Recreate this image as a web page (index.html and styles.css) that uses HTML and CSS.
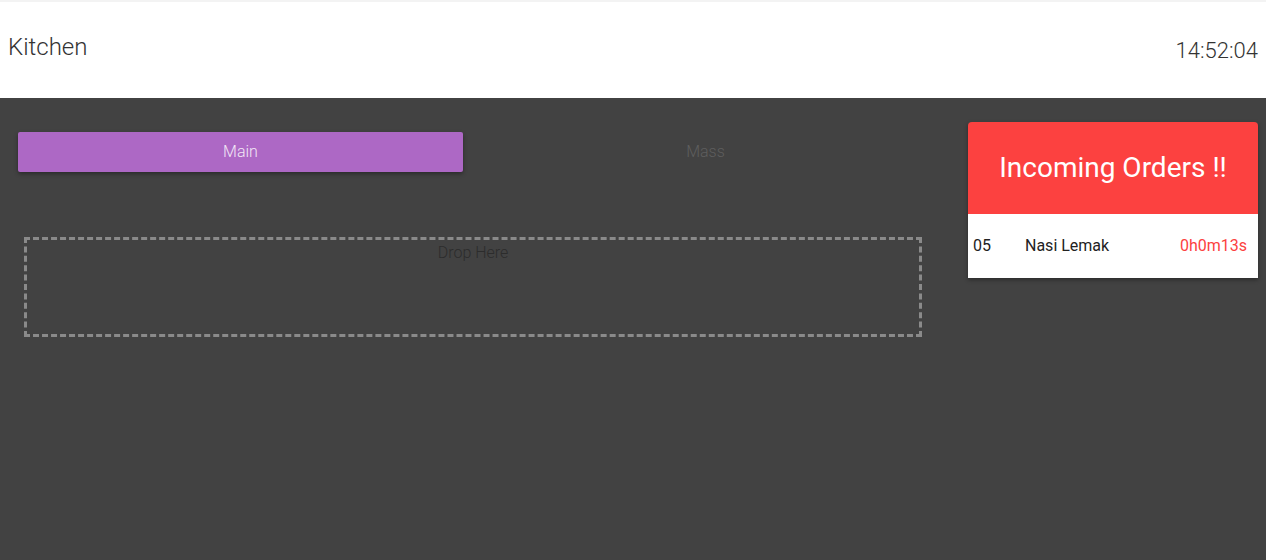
FILE: index.html
```html
<!DOCTYPE html>
<html>
<head>
<meta charset="utf-8">
<link rel="stylesheet" href="styles.css">
</head>
<body>
<header class="topbar">
  <div class="title">Kitchen</div>
  <div class="clock">14:52:04</div>
</header>
<main class="content">
  <section class="left">
    <nav class="tabs">
      <div class="tab active">Main</div>
      <div class="tab">Mass</div>
    </nav>
    <div class="dropzone">Drop Here</div>
  </section>
  <aside class="orders">
    <div class="orders-head">Incoming Orders !!</div>
    <div class="order-row">
      <span class="order-no">05</span>
      <span class="order-name">Nasi Lemak</span>
      <span class="order-time">0h0m13s</span>
    </div>
  </aside>
</main>
</body>
</html>
```
FILE: styles.css
```css
* { box-sizing: border-box; }
html, body { margin: 0; padding: 0; }
body {
  font-family: Roboto, "Liberation Sans", sans-serif;
  background: #424242;
  width: 1266px;
  height: 560px;
  overflow: hidden;
}
.topbar {
  height: 98px;
  background: #fff;
  border-top: 2px solid #f3f3f3;
  display: flex;
  justify-content: space-between;
  align-items: center;
  padding: 0 8px;
  color: #333;
  font-weight: 300;
}
.title { font-size: 24px; margin-top: -6px; }
.clock { font-size: 22px; margin-top: 0; }
.content {
  display: flex;
  padding: 24px 8px 0 18px;
  gap: 20px;
}
.left { width: 930px; }
.tabs {
  display: grid;
  grid-template-columns: 445px 485px;
  margin-top: 10px;
}
.tab {
  height: 40px;
  display: flex;
  align-items: center;
  justify-content: center;
  font-size: 16px;
  font-weight: 300;
  color: #5e5e5e;
  padding-bottom: 2px;
}
.tab.active {
  background: #ad68c5;
  color: #f2e6f6;
  border-radius: 2px;
  box-shadow: 0 2px 4px rgba(0,0,0,0.35);
}
.dropzone {
  margin: 65px 0 0 6px;
  width: 898px;
  height: 100px;
  border: 3px dashed #8a8a8a;
  text-align: center;
  font-size: 16px;
  font-weight: 300;
  color: #2c2c2c;
  padding-top: 3px;
}
.orders {
  width: 290px;
  box-shadow: 0 2px 4px rgba(0,0,0,0.35);
  align-self: flex-start;
}
.orders-head {
  height: 92px;
  background: #fc4140;
  border-radius: 4px 4px 0 0;
  color: #fff;
  font-size: 28px;
  display: flex;
  align-items: center;
  justify-content: center;
  padding-bottom: 2px;
}
.order-row {
  height: 64px;
  background: #fff;
  display: flex;
  align-items: center;
  font-size: 16px;
  color: #222;
  padding: 0 11px 2px 5px;
}
.order-no { width: 52px; }
.order-name { flex: 1; }
.order-time { color: #fc4140; }
```
